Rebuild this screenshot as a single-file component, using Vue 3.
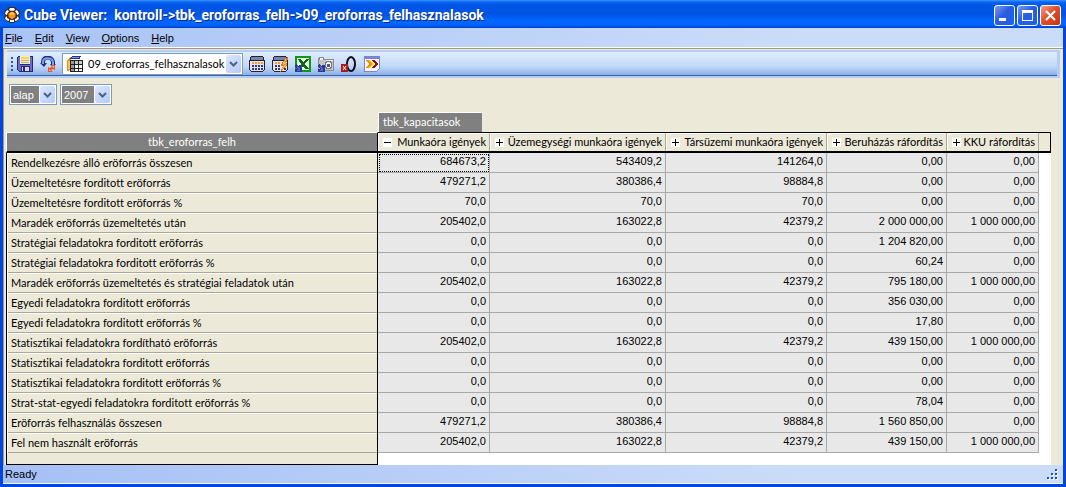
<script setup>
import { ref } from 'vue'

const menus = ['File', 'Edit', 'View', 'Options', 'Help']
const view = ref('09_eroforras_felhasznalasok')
const version = ref('alap')
const year = ref('2007')

const columns = [
  { open: true, label: 'Munkaóra igények' },
  { open: false, label: 'Üzemegységi munkaóra igények' },
  { open: false, label: 'Társüzemi munkaóra igények' },
  { open: false, label: 'Beruházás ráfordítás' },
  { open: false, label: 'KKU ráfordítás' },
]

const zero = ['0,0', '0,0', '0,0']
const rest = ['205402,0', '163022,8', '42379,2']
const used = ['479271,2', '380386,4', '98884,8']
const rows = [
  { label: 'Rendelkezésre álló eröforrás összesen', values: ['684673,2', '543409,2', '141264,0', '0,00', '0,00'] },
  { label: 'Üzemeltetésre forditott eröforrás', values: [...used, '0,00', '0,00'] },
  { label: 'Üzemeltetésre forditott eröforrás %', values: ['70,0', '70,0', '70,0', '0,00', '0,00'] },
  { label: 'Maradék eröforrás üzemeltetés után', values: [...rest, '2 000 000,00', '1 000 000,00'] },
  { label: 'Stratégiai feladatokra forditott eröforrás', values: [...zero, '1 204 820,00', '0,00'] },
  { label: 'Stratégiai feladatokra forditott eröforrás %', values: [...zero, '60,24', '0,00'] },
  { label: 'Maradék eröforrás üzemeltetés és stratégiai feladatok után', values: [...rest, '795 180,00', '1 000 000,00'] },
  { label: 'Egyedi feladatokra forditott eröforrás', values: [...zero, '356 030,00', '0,00'] },
  { label: 'Egyedi feladatokra forditott eröforrás %', values: [...zero, '17,80', '0,00'] },
  { label: 'Statisztikai feladatokra fordítható eröforrás', values: [...rest, '439 150,00', '1 000 000,00'] },
  { label: 'Statisztikai feladatokra forditott eröforrás', values: [...zero, '0,00', '0,00'] },
  { label: 'Statisztikai feladatokra forditott eröforrás %', values: [...zero, '0,00', '0,00'] },
  { label: 'Strat-stat-egyedi feladatokra forditott eröforrás %', values: [...zero, '78,04', '0,00'] },
  { label: 'Eröforrás felhasználás összesen', values: [...used, '1 560 850,00', '0,00'] },
  { label: 'Fel nem használt eröforrás', values: [...rest, '439 150,00', '1 000 000,00'] },
]
</script>

<template>
  <div class="window">
    <header class="titlebar">
      <svg class="logo" viewBox="0 0 16 16" aria-hidden="true">
        <path d="M5 0h6l1 2 3 1 1 4-1 1 1 3-2 3-3 1-1 1H6l-1-1-3-1-2-3 1-3-1-1 1-4 3-1z" fill="#3b2b20" />
        <path d="M6 1h4l1 2-2 1H7L5 3zM12 3l2 1 1 3-2 1-1-2-1-1zM13 9l2 2-1 2-3 1v-2l2-1zM6 13l2-1 2 1v2H6zM1 11l2-2v2l2 1v2l-3-1zM2 4l2-1 1 2-1 1-1 2-2-1z" fill="#fff" />
        <path d="M8 4l4 2v4l-4 3-4-3V6z" fill="#f7941d" stroke="#3b2b20" stroke-width="1" />
        <path d="M8 5l3 2-3 1-3-1z" fill="#ffc83c" />
      </svg>
      <h1>Cube Viewer:&nbsp; kontroll-&gt;tbk_eroforras_felh-&gt;09_eroforras_felhasznalasok</h1>
      <div class="caption-buttons">
        <button type="button" aria-label="Minimize">
          <svg viewBox="0 0 19 19"><path d="M4 12h7v3H4z" fill="#fff" /></svg>
        </button>
        <button type="button" aria-label="Maximize">
          <svg viewBox="0 0 19 19"><path d="M4 4h11v11H4zM5 7v7h9V7z" fill="#fff" fill-rule="evenodd" /></svg>
        </button>
        <button type="button" class="close" aria-label="Close">
          <svg viewBox="0 0 19 19"><path d="M5 5l9 9M14 5l-9 9" stroke="#fff" stroke-width="2.200" /></svg>
        </button>
      </div>
    </header>

    <nav class="menubar">
      <button v-for="m in menus" :key="m" type="button"><u>{{ m[0] }}</u>{{ m.slice(1) }}</button>
    </nav>

    <main class="client">
      <div class="toolbar">
        <span class="grip"><i v-for="n in 4" :key="n"></i></span>
        <button type="button" aria-label="Save">
          <svg viewBox="0 0 16 16" shape-rendering="crispEdges">
            <path d="M1 0h14l1 1v14l-1 1H2l-2-2V1z" fill="#26267c" />
            <path d="M1 1h14v14H2l-1-1z" fill="#6c6cc0" />
            <path d="M3 0h10v8H3z" fill="#f4e9c0" /><path d="M4 1h8v2H4z" fill="#ffd44a" />
            <path d="M4 4h8v1H4zM4 6h8v1H4z" fill="#b9b091" />
            <path d="M3 8h10v1H3z" fill="#26267c" />
            <path d="M4 10h9v5H4z" fill="#26267c" /><path d="M5 11h7v4H5z" fill="#d8d8e8" /><path d="M6 11h2v4H6z" fill="#26267c" />
          </svg>
        </button>
        <button type="button" aria-label="Recalculate">
          <svg viewBox="0 0 16 16">
            <path d="M3 8V6c0-6 9-6 10 0v3" fill="none" stroke="#1c2c80" stroke-width="4" />
            <path d="M0 7h7l-3 4zM10 8h6l-3 3z" fill="#1c2c80" />
            <path d="M3 8V6c0-5 9-5 10 0v3" fill="none" stroke="#7aa0ea" stroke-width="2" />
            <path d="M8 11v5h5l-2-2 2-1 2 1V9h-5l2 2-2 1z" fill="#e8582a" />
            <path d="M9 13v2h2zM12 10h2v2z" fill="#ffc090" />
          </svg>
        </button>
        <span class="combo view-combo">
          <svg class="cube" viewBox="0 0 16 16" shape-rendering="crispEdges" aria-hidden="true">
            <path d="M0 4l4-3v12l-3 2H0z" fill="#e8941c" /><path d="M1 5h3v8H1z" fill="#ffc44a" />
            <path d="M3 2l3-2h8l-1 3H3z" fill="#24348c" /><path d="M5 1h7v1H5z" fill="#7898e0" />
            <path d="M3 4h13v12H3z" fill="#202020" />
            <path d="M4 5h3v3H4zM4 9h3v3H4zM4 13h3v2H4z" fill="#9a9a9a" />
            <path d="M8 5h3v3H8zM12 5h3v3h-3z" fill="#c8c8c8" />
            <path d="M8 9h3v3H8zM12 9h3v3h-3zM8 13h3v2H8zM12 13h3v2h-3z" fill="#fff" />
          </svg>
          <select v-model="view" aria-label="View"><option>09_eroforras_felhasznalasok</option></select>
          <span class="arrow"><svg viewBox="0 0 9 6"><path d="M1 1l3.500 3.500L8 1" /></svg></span>
        </span>
        <button type="button" aria-label="Calculator">
          <svg viewBox="0 0 16 16" shape-rendering="crispEdges">
            <path d="M2 0h12v1h1v3h1v10h-1v1h-1v1H2v-1H1v-1H0V4h1V1h1z" fill="#24242c" />
            <path d="M2 1h12v3H2z" fill="#7c82b0" /><path d="M1 5h14v9h-1v1H2v-1H1z" fill="#e4e4ec" />
            <path d="M3 6h2v2H3zM6 6h2v2H6zM9 6h2v2H9zM12 6h2v2h-2z" fill="#ee9c30" />
            <path d="M3 9h2v2H3zM6 9h2v2H6zM9 9h2v2H9zM12 9h2v2h-2zM3 12h2v2H3zM6 12h2v2H6zM9 12h2v2H9zM12 12h2v2h-2z" fill="#30387c" />
          </svg>
        </button>
        <button type="button" aria-label="Automatic calculation">
          <svg viewBox="0 0 16 16" shape-rendering="crispEdges">
            <path d="M2 0h12v1h1v3h1v10h-1v1h-1v1H2v-1H1v-1H0V4h1V1h1z" fill="#24242c" />
            <path d="M2 1h12v3H2z" fill="#7c82b0" /><path d="M1 5h14v9h-1v1H2v-1H1z" fill="#e4e4ec" />
            <path d="M3 6h2v2H3zM6 6h2v2H6z" fill="#ee9c30" />
            <path d="M3 9h2v2H3zM6 9h2v2H6zM3 12h2v2H3zM6 12h2v2H6zM12 12h2v2h-2z" fill="#30387c" />
            <path d="M16 0l-6 6-1 4h2l-3 6 7-6V7h-1l2-4z" fill="#e07818" /><path d="M15 1l-4 6v2l2-1-3 5 4-4V6h-1z" fill="#ffb850" />
          </svg>
        </button>
        <button type="button" aria-label="Export to Excel">
          <svg viewBox="0 0 16 16" shape-rendering="crispEdges">
            <path d="M0 0h16v16H0z" fill="#0c9a14" /><path d="M2 2h12v12H2z" fill="#f2fff2" />
            <path d="M3 3h3l2 3 3-3h3l-4 5 4 5h-4l-2-3-2 2H4l2-4z" fill="#0a6c10" />
            <path d="M1 8l3 3V9h3v7H0v-3h2l-2-3z" fill="#28389c" /><path d="M2 10l2 2 1-1v4H2l1-2z" fill="#5068c8" />
          </svg>
        </button>
        <button type="button" aria-label="Snapshot">
          <svg viewBox="0 0 16 16" shape-rendering="crispEdges">
            <path d="M1 1h5v2h9l1 1v10l-1 1H1l-1-1V2z" fill="#8c8c90" /><path d="M1 4h14v10H1z" fill="#c4c4c4" /><path d="M2 2h3v2H2zM8 4h7v1H8z" fill="#eee" />
            <circle cx="10.500" cy="9" r="4" fill="#77777c" /><circle cx="10.500" cy="9" r="3" fill="#f2f2f2" /><path d="M9 8h3v3H9z" fill="#50548c" />
            <path d="M1 8l3 3V9h3v7H0v-3h2l-2-3z" fill="#28389c" /><path d="M2 10l2 2 1-1v4H2l1-2z" fill="#5068c8" />
          </svg>
        </button>
        <button type="button" aria-label="Suppress zeros">
          <svg viewBox="0 0 16 16">
            <ellipse cx="10" cy="8" rx="4" ry="7" fill="none" stroke="#101010" stroke-width="2" />
            <path d="M0 8h7v8H0z" fill="#a81c1c" /><path d="M2 10l3 4M5 10l-3 4" stroke="#fff" stroke-width="1" />
          </svg>
        </button>
        <button type="button" aria-label="More">
          <svg viewBox="0 0 16 16" shape-rendering="crispEdges">
            <path d="M0 0h16v12l-4 4H0z" fill="#7c84d0" /><path d="M1 3h14v9l-3 3H1z" fill="#f6f6fc" />
            <path d="M2 4h3l3 4-3 4H2l3-4z" fill="#f08c10" /><path d="M5 4h2l3 4-3 4H5l3-4z" fill="#ffe020" /><path d="M8 4h3l3 4-3 4H8l3-4z" fill="#981018" />
          </svg>
        </button>
      </div>

      <div class="filters">
        <span class="combo filter">
          <select v-model="version" aria-label="Version"><option>alap</option></select>
          <span class="arrow"><svg viewBox="0 0 9 6"><path d="M1 1l3.500 3.500L8 1" /></svg></span>
        </span>
        <span class="combo filter year">
          <select v-model="year" aria-label="Year"><option>2007</option></select>
          <span class="arrow"><svg viewBox="0 0 9 6"><path d="M1 1l3.500 3.500L8 1" /></svg></span>
        </span>
      </div>

      <table>
        <colgroup>
          <col class="c-label" /><col class="c1" /><col class="c2" /><col class="c3" /><col class="c4" /><col class="c5" /><col />
        </colgroup>
        <thead>
          <tr class="tab-row">
            <td></td>
            <th colspan="6"><span class="tab">tbk_kapacitasok</span></th>
          </tr>
          <tr class="head-row">
            <th class="corner">tbk_eroforras_felh</th>
            <th v-for="c in columns" :key="c.label" scope="col">
              <div class="col-head">
                <button type="button" :aria-label="c.open ? 'Collapse' : 'Expand'">
                  <svg viewBox="0 0 9 9" shape-rendering="crispEdges">
                    <path :d="c.open ? 'M1 4h7v1H1z' : 'M1 4h7v1H1zM4 1h1v7H4z'" />
                  </svg>
                </button>
                <span>{{ c.label }}</span>
              </div>
            </th>
            <th class="last"></th>
          </tr>
        </thead>
        <tbody>
          <tr v-for="(r, i) in rows" :key="r.label">
            <th scope="row">{{ r.label }}</th>
            <td v-for="(v, j) in r.values" :key="j" :class="{ selected: i === 0 && j === 0 }">{{ v }}</td>
            <td class="blank"></td>
          </tr>
          <tr class="end-row">
            <th></th>
            <td colspan="6" class="blank"></td>
          </tr>
        </tbody>
      </table>
    </main>

    <footer class="statusbar">
      <span>Ready</span>
      <svg viewBox="0 0 12 12" aria-hidden="true" shape-rendering="crispEdges">
        <path d="M9 1h2v2H9zM5 5h2v2H5zM9 5h2v2H9zM1 9h2v2H1zM5 9h2v2H5zM9 9h2v2H9z" fill="#fff" />
        <path d="M8 0h2v2H8zM4 4h2v2H4zM8 4h2v2H8zM0 8h2v2H0zM4 8h2v2H4zM8 8h2v2H8z" fill="#1450d8" />
      </svg>
    </footer>
  </div>
</template>

<style>
body {
  margin: 0;
}
</style>

<style scoped>
* {
  box-sizing: border-box;
}
.window {
  display: flex;
  flex-direction: column;
  min-height: 100vh;
  border: solid #0046e0;
  border-width: 0 3px 3px;
  background: #ece9d8;
  font: 11px/14px "Liberation Sans", Arial, sans-serif;
  font-variant-ligatures: none;
  color: #000;
}
button,
select {
  margin: 0;
  padding: 0;
  border: 0;
  background: none;
  font: inherit;
  color: inherit;
}
svg {
  display: block;
}
.titlebar {
  display: flex;
  align-items: center;
  height: 28px;
  margin: 0 -3px;
  padding: 2px 5px 0 4px;
  background: linear-gradient(#3a96ff 0, #0a66f4 2px, #0055e5 5px, #0054e3 14px, #0066ff 21px, #0064fc 25px, #003fd2 28px);
}
.logo {
  width: 16px;
  height: 16px;
}
h1 {
  flex: 1;
  margin: 0 0 0 4px;
  font: bold 14px/18px Roboto, sans-serif;
  color: #fff;
  text-shadow: 1px 1px 0 #0a2a80;
  white-space: nowrap;
}
.caption-buttons {
  display: flex;
  gap: 2px;
}
.caption-buttons button {
  width: 21px;
  height: 21px;
  border: 1px solid #fff;
  border-radius: 3px;
  background: linear-gradient(135deg, #7a9cf0, #2a5de0 45%, #1b62f0);
}
.caption-buttons .close {
  background: linear-gradient(135deg, #f0a088, #e05030 45%, #c83408);
}
.menubar {
  display: flex;
  gap: 12px;
  height: 20px;
  padding: 3px 2px 0;
  border-bottom: 1px solid #fff;
  background: linear-gradient(to right, #a9c3f6, #cbdcf8 75%);
}
.menubar button {
  height: 14px;
}
.client {
  flex: 1;
  padding: 0 3px 0 2px;
  border: solid #9d9a87;
  border-width: 1px 0 0 1px;
}
.toolbar {
  display: flex;
  align-items: center;
  gap: 7px;
  height: 28px;
  margin: 1px 0 0 1px;
  padding: 0 4px;
  border: solid #b4cdf6;
  border-width: 2px 3px 2px 0;
  background: linear-gradient(#dfecfe 0, #c3d9f9 14px, #8cb1e8 23px, #3b61a6 23px);
}
.toolbar > button {
  width: 16px;
  height: 16px;
}
.grip {
  display: grid;
  gap: 2px;
  margin-right: -3px;
}
.grip i {
  width: 2px;
  height: 2px;
  background: #3c5484;
}
.combo {
  position: relative;
  display: inline-flex;
  align-items: center;
}
.combo select {
  appearance: none;
  border: 1px solid #7f9db9;
  border-radius: 0;
  outline: 0;
}
.view-combo {
  margin: 0 -1px;
}
.view-combo select {
  width: 181px;
  height: 22px;
  padding-left: 25px;
  background: #fff;
  font-family: Lato, sans-serif;
}
.cube {
  position: absolute;
  left: 5px;
  width: 16px;
  height: 16px;
}
.arrow {
  position: absolute;
  top: 2px;
  right: 2px;
  bottom: 2px;
  display: grid;
  place-items: center;
  width: 15px;
  border-radius: 2px;
  background: linear-gradient(135deg, #dce7fe, #b4caf8);
  pointer-events: none;
}
.arrow svg {
  width: 9px;
  height: 6px;
  fill: none;
  stroke: #4d6185;
  stroke-width: 2;
}
.filters {
  display: flex;
  gap: 3px;
  padding: 6px 3px 7px;
}
.filter select {
  width: 48px;
  height: 21px;
  padding-left: 3px;
  background: linear-gradient(#808080, #808080) 1px 1px / calc(100% - 18px) calc(100% - 2px) no-repeat #fff;
  color: #fff;
}
.filter.year select {
  width: 52px;
}
table {
  width: calc(100% - 9px);
  border-spacing: 0;
  table-layout: fixed;
}
.c-label {
  width: 372px;
}
.c1 {
  width: 112px;
}
.c2 {
  width: 176px;
}
.c3 {
  width: 161px;
}
.c4 {
  width: 120px;
}
.c5 {
  width: 92px;
}
th,
td {
  padding: 0;
  font-weight: normal;
  white-space: nowrap;
}
th {
  font-family: Lato, sans-serif;
}
.tab-row th {
  height: 20px;
  text-align: left;
  vertical-align: top;
}
.tab {
  display: block;
  width: 104px;
  height: 20px;
  padding: 1px 4px;
  border: solid #fff;
  border-width: 1px 0 0 1px;
  background: #808080;
  color: #fff;
  line-height: 16px;
}
.head-row th {
  height: 21px;
  border: solid #000;
  border-width: 1px 0 2px;
  box-shadow: inset -1px 0 #aca899, inset 1px 1px #fff;
}
.head-row .corner {
  border-top-color: #fff;
  border-right: 1px solid #000;
  border-left: 1px solid #fff;
  background: #808080;
  box-shadow: none;
  color: #fff;
}
.head-row .last {
  border-right: 1px solid #000;
  box-shadow: none;
}
.col-head {
  display: flex;
  align-items: center;
  justify-content: space-between;
  padding: 0 4px 0 5px;
}
.col-head button {
  flex: none;
  width: 9px;
  height: 9px;
  background: #fff;
}
tbody th {
  height: 20px;
  padding-left: 4px;
  border: solid #000;
  border-width: 0 1px;
  box-shadow: inset 1px 1px #fff, inset 0 -1px #aca899;
  text-align: left;
}
tbody td {
  height: 20px;
  padding: 0 3px 3px 0;
  border: solid #a9a9a9;
  border-width: 0 1px 1px 0;
  background: #e8e8e8;
  text-align: right;
}
tbody td.selected {
  outline: 1px dotted #000;
  outline-offset: -2px;
}
tbody td.blank {
  border: 0;
  background: #fff;
}
.end-row th,
.end-row td.blank {
  height: 12px;
  padding: 0;
}
.end-row th {
  border-bottom: 1px solid #000;
  box-shadow: none;
}
.statusbar {
  display: flex;
  align-items: flex-end;
  justify-content: space-between;
  height: 19px;
  padding: 0 4px 2px 2px;
  border-bottom: 1px solid #f4f6fc;
  background: linear-gradient(to right, #a5c0f6, #cbdcf8 75%);
}
.statusbar svg {
  width: 12px;
  height: 12px;
}
</style>
